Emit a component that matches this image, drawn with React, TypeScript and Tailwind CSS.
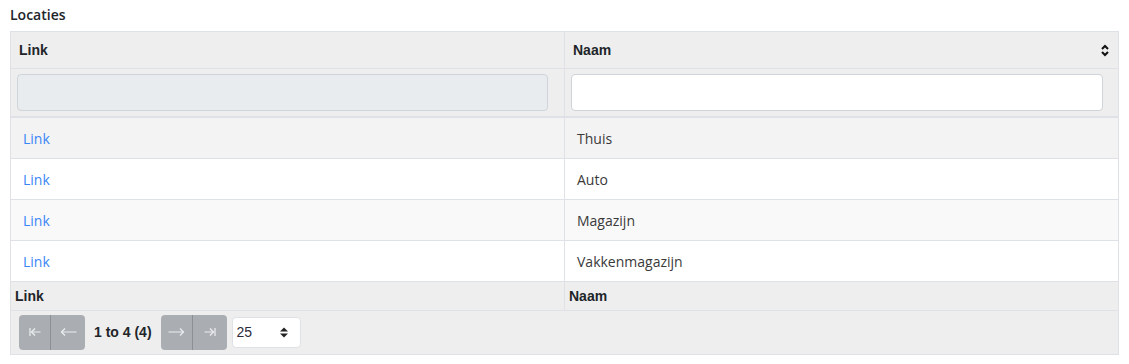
import React from "react";

const rows = ["Thuis", "Auto", "Magazijn", "Vakkenmagazijn"];
const rowBg = ["bg-[#f3f3f3]", "bg-white", "bg-[#f9f9f9]", "bg-white"];

const SortIcon = () => (
  <svg width="8" height="13" viewBox="0 0 8 13" className="block">
    <path d="M1 5 L4 2 L7 5" fill="none" stroke="#111" strokeWidth="2" />
    <path d="M1 8 L4 11 L7 8" fill="none" stroke="#111" strokeWidth="2" />
  </svg>
);

// thin arrows used in the pager buttons
const Arrow = ({ dir, bar }: { dir: "l" | "r"; bar?: boolean }) => {
  const w = bar ? 12 : 17;
  const flip = dir === "r" ? `translate(${w} 0) scale(-1 1)` : undefined;
  return (
    <svg width={w} height="10" viewBox={`0 0 ${w} 10`} className="block">
      <g transform={flip} fill="none" stroke="#eceef0" strokeWidth="1.2">
        {bar && <path d="M1 1 V9" />}
        <path d={`M${bar ? 2 : 1} 5 H${w - 0.5}`} />
        <path d={`M${bar ? 6 : 5} 1.5 L${bar ? 2.5 : 1.5} 5 L${bar ? 6 : 5} 8.5`} />
      </g>
    </svg>
  );
};

const PagerGroup = ({ children }: { children: React.ReactNode[] }) => (
  <div className="flex h-[35px] rounded-[4px] overflow-hidden bg-[#aaaeb2]">
    <div className="w-[32px] flex items-center justify-center border-r border-[#8c9094]">
      {children[0]}
    </div>
    <div className="w-[34px] flex items-center justify-center">{children[1]}</div>
  </div>
);

const App: React.FC = () => {
  return (
    <div className="w-[1129px] h-[364px] bg-white px-[10px] font-['Open_Sans',sans-serif] text-[#212529]">
      <div className="h-[31px] pt-[5px] text-[14px] font-semibold leading-[20px]">
        Locaties
      </div>

      <div className="border border-[#dee2e6] font-['Liberation_Sans',Arial,sans-serif]">
        {/* header */}
        <div className="flex h-[37px] bg-[#eeeeee] border-b border-[#dee2e6] text-[14px] font-bold text-[#212529]">
          <div className="w-[554px] border-r border-[#dee2e6] px-[8px] flex items-center">
            Link
          </div>
          <div className="flex-1 px-[8px] flex items-center justify-between">
            <span>Naam</span>
            <span className="mr-[1px]">
              <SortIcon />
            </span>
          </div>
        </div>

        {/* filters */}
        <div className="flex h-[49px] bg-[#eeeeee] border-b-2 border-[#dee2e6]">
          <div className="w-[554px] border-r border-[#dee2e6] pl-[6px] pt-[5px]">
            <div className="w-[531px] h-[37px] rounded-[4px] border border-[#ced4da] bg-[#e9ecef]" />
          </div>
          <div className="flex-1 pl-[6px] pt-[5px]">
            <input className="w-[532px] h-[37px] rounded-[4px] border border-[#ced4da] bg-white outline-none" />
          </div>
        </div>

        {/* rows */}
        {rows.map((name, i) => (
          <div
            key={name}
            className={`flex h-[41px] border-b border-[#dee2e6] text-[14px] font-['Open_Sans',sans-serif] ${rowBg[i]}`}
          >
            <div className="w-[554px] border-r border-[#dee2e6] px-[12px] flex items-center text-[#3b86f7]">
              Link
            </div>
            <div className="flex-1 px-[12px] flex items-center text-[#3a3a3a]">
              {name}
            </div>
          </div>
        ))}

        {/* footer */}
        <div className="flex h-[29px] bg-[#eeeeee] border-b border-[#dee2e6] text-[14px] font-bold text-[#212529]">
          <div className="w-[554px] border-r border-[#dee2e6] px-[4px] flex items-center">
            Link
          </div>
          <div className="flex-1 px-[4px] flex items-center">Naam</div>
        </div>

        {/* pagination */}
        <div className="h-[43px] bg-[#eeeeee] flex items-center pl-[8px] gap-[9px] pb-[1px]">
          <PagerGroup>
            <Arrow dir="l" bar />
            <Arrow dir="l" />
          </PagerGroup>
          <span className="text-[14px] font-bold text-[#212529]">1 to 4 (4)</span>
          <PagerGroup>
            <Arrow dir="r" />
            <Arrow dir="r" bar />
          </PagerGroup>
          <div className="-ml-[4px] w-[69px] h-[31px] bg-white border border-[#dee2e6] rounded-[4px] flex items-center justify-between pl-[4px] pr-[12px] text-[14px] text-[#2b2b3b]">
            <span>25</span>
            <svg width="8" height="11" viewBox="0 0 8 11">
              <path d="M0 4.5 L4 0.5 L8 4.5 Z" fill="#222" />
              <path d="M0 6.5 L4 10.5 L8 6.5 Z" fill="#222" />
            </svg>
          </div>
        </div>
      </div>
    </div>
  );
};

export default App;
